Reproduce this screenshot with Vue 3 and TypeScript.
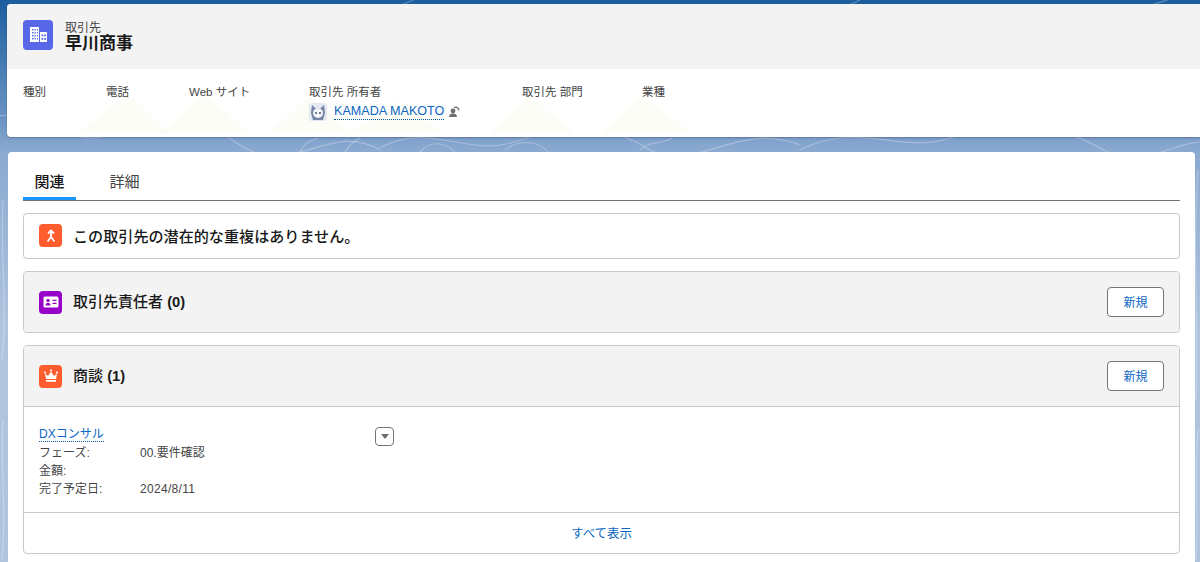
<script setup lang="ts">
interface Field { label: string; width: number }
const fields: Field[] = [
  { label: '種別', width: 83 },
  { label: '電話', width: 83 },
  { label: 'Web サイト', width: 120 },
  { label: '取引先 所有者', width: 213 },
  { label: '取引先 部門', width: 120 },
  { label: '業種', width: 60 },
]
const rows = [
  { k: 'フェーズ:', v: '00.要件確認' },
  { k: '金額:', v: '' },
  { k: '完了予定日:', v: '2024/8/11' },
]
const contours = [
  'M-20 120 C40 100 60 150 110 135 S190 110 240 145 S330 120 380 150',
  'M380 148 C430 120 470 160 520 140 S610 125 650 150 S740 120 800 145',
  'M800 150 C860 120 900 155 950 138 S1050 120 1100 148 S1180 130 1220 145',
  'M20 20 C60 -10 110 30 150 5 M300 30 C340 0 390 20 420 -5 M700 25 C760 0 800 30 860 0 M1020 30 C1060 5 1110 25 1180 -5',
  'M300 152 C305 142 312 140 318 138 M345 152 C350 145 352 142 360 138 M420 152 C430 140 445 142 455 152 M505 150 C520 138 540 142 548 152 M640 150 C650 140 660 145 672 138',
  'M3 200 C0 260 8 300 2 360 M1198 170 C1192 250 1199 320 1196 400 M3 420 C0 470 7 510 2 560 M1198 430 C1194 480 1199 520 1196 560',
]
const peaks = ['78,137 127,97 170,137', '160,137 205,97 250,137', '268,137 310,100 352,137', '350,137 398,105 445,137', '490,137 530,100 575,137', '600,137 642,100 692,137']
</script>

<template>
  <div class="page">
    <svg class="backdrop" width="1200" height="562" viewBox="0 0 1200 562" aria-hidden="true">
      <path v-for="(d, i) in contours" :key="i" :d="d" fill="none" stroke="#fff" stroke-opacity=".28" stroke-width="1.2" />
    </svg>

    <section class="highlights">
      <header class="hl-head">
        <span class="icon big">
          <svg width="22" height="22" viewBox="0 0 22 22">
            <path fill="#fff" d="M3 3h9v15H3zM13 8h7v10h-7z" />
            <path fill="#5867e8" d="M5 5h1.400v1.400H5zM7.500 5h1.400v1.400H7.500zM10 5h1v1.400h-1zM5 8h1.400v1.400H5zM7.500 8h1.400v1.400H7.500zM10 8h1v1.400h-1zM5 11h1.400v1.400H5zM7.500 11h1.400v1.400H7.500zM10 11h1v1.400h-1zM5 14h1.400v1.400H5zM7.500 14h1.400v1.400H7.500zM10 14h1v1.400h-1zM14.500 10.500h1.800v1.800h-1.800zM17.200 10.500h1.800v1.800h-1.800zM14.500 14h1.800v1.800h-1.800zM17.200 14h1.800v1.800h-1.800z" />
          </svg>
        </span>
        <div class="hl-title">
          <div class="entity">取引先</div>
          <h1>早川商事</h1>
        </div>
      </header>
      <div class="hl-fields">
        <svg class="peaks" width="1193" height="68" viewBox="7 73 1193 68" aria-hidden="true">
          <polygon v-for="(p, i) in peaks" :key="i" :points="p" fill="#f8f7e6" fill-opacity=".3" />
        </svg>
        <div v-for="f in fields" :key="f.label" class="field" :style="{ width: f.width + 'px' }">
          <div class="label">{{ f.label }}</div>
          <div v-if="f.label === '取引先 所有者'" class="owner">
            <svg class="avatar" width="18" height="18" viewBox="0 0 18 18">
              <rect width="18" height="18" rx="3" fill="#e3e8f3" />
              <path d="M3 2l3.200 3h5.600L15 2l1 8-2 7H4l-2-7z" fill="#7585a6" />
              <circle cx="9" cy="10" r="5" fill="#f3f5fa" />
              <circle cx="7" cy="10" r="1" fill="#46536d" />
              <circle cx="11" cy="10" r="1" fill="#46536d" />
            </svg>
            <a class="link">KAMADA MAKOTO</a>
            <svg class="swap" width="12" height="12" viewBox="0 0 12 12">
              <circle cx="5" cy="5" r="2.400" fill="#706e6b" />
              <path d="M1 11c0-2.500 1.800-3.500 4-3.500s4 1 4 3.500z" fill="#706e6b" />
              <path d="M6 1.500c2.500-1 4.800.5 5 3" fill="none" stroke="#706e6b" stroke-width="1.300" />
            </svg>
          </div>
        </div>
      </div>
    </section>

    <main class="related">
      <nav class="tabs">
        <a class="tab active">関連</a>
        <a class="tab">詳細</a>
      </nav>

      <div class="card plain">
        <span class="icon small orange">
          <svg width="16" height="16" viewBox="0 0 16 16" fill="none" stroke="#fff" stroke-width="1.800">
            <path d="M8 9V3M5 5.500 8 2.500l3 3M8 9 4.500 13.500M8 9l3.500 4.500" />
          </svg>
        </span>
        <span class="card-title wide">この取引先の潜在的な重複はありません。</span>
      </div>

      <div class="card head-only">
        <div class="card-head">
          <span class="icon small purple">
            <svg width="16" height="12" viewBox="0 0 16 12">
              <rect x="0.500" y="0.500" width="15" height="11" rx="1.500" fill="#fff" />
              <circle cx="5" cy="4.500" r="1.700" fill="#9602c7" />
              <path d="M2.500 9.500c0-2 1-2.500 2.500-2.500s2.500.5 2.500 2.500zM9.500 3.800h4v1.200h-4zM9.500 6.800h4V8h-4z" fill="#9602c7" />
            </svg>
          </span>
          <span class="card-title">取引先責任者 <b class="num">(0)</b></span>
          <button class="btn" type="button">新規</button>
        </div>
      </div>

      <div class="card">
        <div class="card-head ruled">
          <span class="icon small orange">
            <svg width="16" height="15" viewBox="0 0 16 15" fill="#fff">
              <path d="M2 4.500 5 7l3-4.500L11 7l3-2.500L13 10H3z" />
              <circle cx="2" cy="3.500" r="1.100" /><circle cx="8" cy="1.500" r="1.100" /><circle cx="14" cy="3.500" r="1.100" />
              <path d="M3 11h10v1.800H3z" />
            </svg>
          </span>
          <span class="card-title">商談 <b class="num">(1)</b></span>
          <button class="btn" type="button">新規</button>
        </div>
        <div class="opp">
          <div class="opp-main">
            <a class="link">DXコンサル</a>
            <dl>
              <template v-for="r in rows" :key="r.k">
                <dt>{{ r.k }}</dt>
                <dd>{{ r.v }}</dd>
              </template>
            </dl>
          </div>
          <span class="menu"><i></i></span>
        </div>
        <a class="view-all">すべて表示</a>
      </div>
    </main>
  </div>
</template>

<style>
html, body { margin: 0; overflow: hidden; }
</style>

<style scoped>
.page {
  position: relative;
  width: 1200px;
  height: 562px;
  overflow: hidden;
  box-sizing: border-box;
  padding: 4px 0 0 7px;
  background: linear-gradient(180deg, #1b5e9f 0, #6f97c5 125px, #8aa9d0 150px, #b0c4de 330px, #b0c4de 562px);
  font-family: "Liberation Sans", "Noto Sans CJK JP", sans-serif;
  color: #181818;
}
.backdrop { position: absolute; inset: 0; }
.highlights {
  position: relative;
  width: 1193px;
  height: 133px;
  background: #fff;
  border-radius: 4px 0 0 4px;
  box-shadow: 0 1px 2px rgba(0, 0, 0, .25);
  overflow: hidden;
}
.hl-head {
  height: 65px;
  box-sizing: border-box;
  padding: 16px 16px 0;
  background: #f3f3f3;
  display: flex;
  gap: 12px;
}
.icon {
  display: flex;
  align-items: center;
  justify-content: center;
  flex: none;
  border-radius: 4px;
}
.icon.big { width: 30px; height: 30px; background: #5867e8; }
.icon.small { width: 23px; height: 23px; }
.orange { background: #ff5d2d; }
.purple { background: #9602c7; }
.entity { font-size: 12px; line-height: 14px; color: #444; margin-top: 1px; }
h1 { margin: -1px 0 0; font-size: 17px; line-height: 19px; font-weight: 700; color: #181818; }
.hl-fields {
  position: relative;
  display: flex;
  padding: 15px 16px 0;
  height: 68px;
  box-sizing: border-box;
}
.peaks { position: absolute; left: 0; top: 0; }
.field { position: relative; flex: none; }
.label { font-size: 11.5px; line-height: 16px; color: #444; white-space: nowrap; }
.owner { display: flex; align-items: center; height: 20px; margin-top: 2px; }
.avatar { margin-right: 7px; }
.swap { margin-left: 4px; }
.link {
  color: #0b66c3;
  font-size: 12.6px;
  line-height: 15px;
  border-bottom: 1px dotted #0b5cab;
  white-space: nowrap;
}
.related {
  position: relative;
  width: 1187px;
  margin: 15px 0 0 1px;
  height: 420px;
  box-sizing: border-box;
  padding: 15px 15px 0;
  background: #fff;
  border-radius: 4px 4px 0 0;
}
.tabs {
  display: flex;
  height: 33px;
  border-bottom: 1px solid #747474;
  font-size: 15px;
}
.tab {
  width: 53px;
  height: 33px;
  box-sizing: border-box;
  text-align: center;
  line-height: 30px;
  color: #444;
}
.tab + .tab { margin-left: 22px; }
.tab.active { color: #181818; font-weight: 500; border-bottom: 3px solid #1b96ff; }
.card {
  margin-top: 12px;
  border: 1px solid #c9c9c9;
  border-radius: 4px;
  background: #fff;
  overflow: hidden;
}
.card.plain {
  height: 46px;
  box-sizing: border-box;
  display: flex;
  align-items: center;
  padding: 0 15px 1px;
  gap: 11px;
}
.card-head {
  height: 60px;
  display: flex;
  align-items: center;
  padding: 0 15px;
  gap: 11px;
  background: #f3f3f3;
}
.card-head.ruled { border-bottom: 1px solid #c9c9c9; }
.card-title { font-size: 15px; font-weight: 500; color: #181818; white-space: nowrap; padding-bottom: 3px; }
.card-title.wide { font-size: 15.1px; padding-bottom: 2px; }
.num { font-weight: 700; font-size: 14.7px; }
.btn {
  margin-left: auto;
  width: 57px;
  height: 30px;
  background: #fff;
  border: 1px solid #747474;
  border-radius: 4px;
  color: #0b66c3;
  font: 12px "Liberation Sans", "Noto Sans CJK JP", sans-serif;
  padding: 0 0 2px;
}
.opp {
  height: 106px;
  box-sizing: border-box;
  display: flex;
  padding: 20px 15px 0;
  border-bottom: 1px solid #c9c9c9;
  font-size: 12px;
}
.opp-main { width: 336px; }
.opp-main .link { font-size: 12px; line-height: 14px; display: inline-block; }
dl {
  margin: 2px 0 0;
  display: grid;
  grid-template-columns: 101px 1fr;
  grid-auto-rows: 18px;
  line-height: 18px;
  color: #444;
}
dd { margin: 0; }
dd:last-child { letter-spacing: .3px; }
.menu {
  width: 19px;
  height: 19px;
  box-sizing: border-box;
  border: 1px solid #747474;
  border-radius: 4px;
  display: flex;
  align-items: center;
  justify-content: center;
}
.menu i {
  width: 0;
  height: 0;
  border-left: 4.500px solid transparent;
  border-right: 4.500px solid transparent;
  border-top: 5px solid #706e6b;
}
.view-all {
  display: block;
  height: 40px;
  box-sizing: border-box;
  padding-top: 1px;
  line-height: 40px;
  text-align: center;
  font-size: 12.4px;
  color: #0b66c3;
}
</style>
